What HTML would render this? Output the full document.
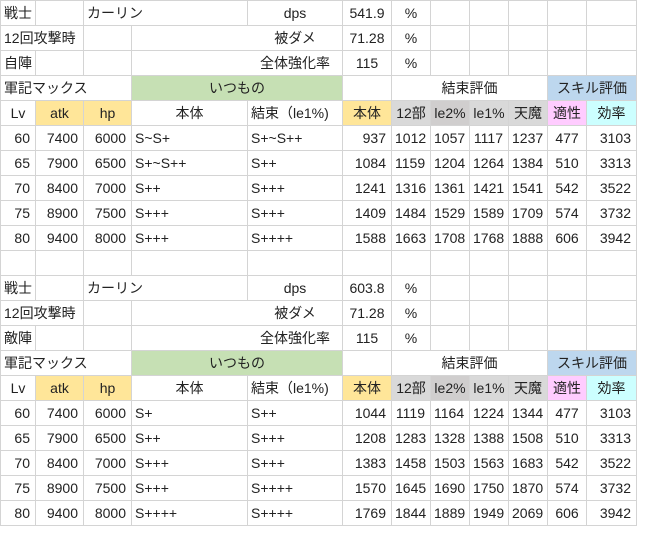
<!DOCTYPE html>
<html><head><meta charset="utf-8">
<style>
html,body{margin:0;padding:0;background:#fff;width:652px;height:544px;overflow:hidden}
table{position:absolute;left:0;top:0;border-collapse:collapse;table-layout:fixed;width:636px;
font-family:"Liberation Sans","Noto Sans CJK JP",sans-serif;font-size:14px;color:#222}
td{border:1px solid #d4d4d4;height:24px;padding:0 3px;white-space:nowrap;overflow:visible;box-sizing:border-box}
tr{height:25px}
.r{text-align:right;padding-right:5px}
.c{text-align:center}
.g{background:#c6e0b4}
.y{background:#ffe699}
.gr{background:#d9d9d9}
.dg{background:#d0cece}
.p{background:#ffccff}
.cy{background:#ccffff}
.b{background:#bdd7ee}
td.nr{border-right-color:#fff}
</style></head><body>
<table>
<colgroup><col style="width:35px"><col style="width:48px"><col style="width:48px"><col style="width:116px"><col style="width:95px"><col style="width:49px"><col style="width:39px"><col style="width:39px"><col style="width:39px"><col style="width:39px"><col style="width:39px"><col style="width:50px"></colgroup>
<tr><td>戦士</td><td></td><td colspan="2">カーリン</td><td class="c">dps</td><td class="c">541.9</td><td class="c">%</td><td></td><td></td><td></td><td></td><td></td></tr>
<tr><td colspan="2">12回攻撃時</td><td></td><td class="nr"></td><td class="c">被ダメ</td><td class="c">71.28</td><td class="c">%</td><td></td><td></td><td></td><td></td><td></td></tr>
<tr><td>自陣</td><td></td><td></td><td class="nr"></td><td class="c">全体強化率</td><td class="c">115</td><td class="c">%</td><td></td><td></td><td></td><td></td><td></td></tr>
<tr><td colspan="3">軍記マックス</td><td colspan="2" class="c g">いつもの</td><td></td><td colspan="4" class="c">結束評価</td><td colspan="2" class="c b">スキル評価</td></tr>
<tr><td class="c">Lv</td><td class="c y">atk</td><td class="c y">hp</td><td class="c">本体</td><td>結束（le1%)</td><td class="c y">本体</td><td class="c gr">12部</td><td class="c dg">le2%</td><td class="c gr">le1%</td><td class="c gr">天魔</td><td class="c p">適性</td><td class="c cy">効率</td></tr>
<tr><td class="r">60</td><td class="r">7400</td><td class="r">6000</td><td>S~S+</td><td>S+~S++</td><td class="r">937</td><td class="r">1012</td><td class="r">1057</td><td class="r">1117</td><td class="r">1237</td><td class="c">477</td><td class="r">3103</td></tr>
<tr><td class="r">65</td><td class="r">7900</td><td class="r">6500</td><td>S+~S++</td><td>S++</td><td class="r">1084</td><td class="r">1159</td><td class="r">1204</td><td class="r">1264</td><td class="r">1384</td><td class="c">510</td><td class="r">3313</td></tr>
<tr><td class="r">70</td><td class="r">8400</td><td class="r">7000</td><td>S++</td><td>S+++</td><td class="r">1241</td><td class="r">1316</td><td class="r">1361</td><td class="r">1421</td><td class="r">1541</td><td class="c">542</td><td class="r">3522</td></tr>
<tr><td class="r">75</td><td class="r">8900</td><td class="r">7500</td><td>S+++</td><td>S+++</td><td class="r">1409</td><td class="r">1484</td><td class="r">1529</td><td class="r">1589</td><td class="r">1709</td><td class="c">574</td><td class="r">3732</td></tr>
<tr><td class="r">80</td><td class="r">9400</td><td class="r">8000</td><td>S+++</td><td>S++++</td><td class="r">1588</td><td class="r">1663</td><td class="r">1708</td><td class="r">1768</td><td class="r">1888</td><td class="c">606</td><td class="r">3942</td></tr>
<tr><td></td><td></td><td></td><td></td><td></td><td></td><td></td><td></td><td></td><td></td><td></td><td></td></tr>
<tr><td>戦士</td><td></td><td colspan="2">カーリン</td><td class="c">dps</td><td class="c">603.8</td><td class="c">%</td><td></td><td></td><td></td><td></td><td></td></tr>
<tr><td colspan="2">12回攻撃時</td><td></td><td class="nr"></td><td class="c">被ダメ</td><td class="c">71.28</td><td class="c">%</td><td></td><td></td><td></td><td></td><td></td></tr>
<tr><td>敵陣</td><td></td><td></td><td class="nr"></td><td class="c">全体強化率</td><td class="c">115</td><td class="c">%</td><td></td><td></td><td></td><td></td><td></td></tr>
<tr><td colspan="3">軍記マックス</td><td colspan="2" class="c g">いつもの</td><td></td><td colspan="4" class="c">結束評価</td><td colspan="2" class="c b">スキル評価</td></tr>
<tr><td class="c">Lv</td><td class="c y">atk</td><td class="c y">hp</td><td class="c">本体</td><td>結束（le1%)</td><td class="c y">本体</td><td class="c gr">12部</td><td class="c dg">le2%</td><td class="c gr">le1%</td><td class="c gr">天魔</td><td class="c p">適性</td><td class="c cy">効率</td></tr>
<tr><td class="r">60</td><td class="r">7400</td><td class="r">6000</td><td>S+</td><td>S++</td><td class="r">1044</td><td class="r">1119</td><td class="r">1164</td><td class="r">1224</td><td class="r">1344</td><td class="c">477</td><td class="r">3103</td></tr>
<tr><td class="r">65</td><td class="r">7900</td><td class="r">6500</td><td>S++</td><td>S+++</td><td class="r">1208</td><td class="r">1283</td><td class="r">1328</td><td class="r">1388</td><td class="r">1508</td><td class="c">510</td><td class="r">3313</td></tr>
<tr><td class="r">70</td><td class="r">8400</td><td class="r">7000</td><td>S+++</td><td>S+++</td><td class="r">1383</td><td class="r">1458</td><td class="r">1503</td><td class="r">1563</td><td class="r">1683</td><td class="c">542</td><td class="r">3522</td></tr>
<tr><td class="r">75</td><td class="r">8900</td><td class="r">7500</td><td>S+++</td><td>S++++</td><td class="r">1570</td><td class="r">1645</td><td class="r">1690</td><td class="r">1750</td><td class="r">1870</td><td class="c">574</td><td class="r">3732</td></tr>
<tr><td class="r">80</td><td class="r">9400</td><td class="r">8000</td><td>S++++</td><td>S++++</td><td class="r">1769</td><td class="r">1844</td><td class="r">1889</td><td class="r">1949</td><td class="r">2069</td><td class="c">606</td><td class="r">3942</td></tr>
</table>
</body></html>
